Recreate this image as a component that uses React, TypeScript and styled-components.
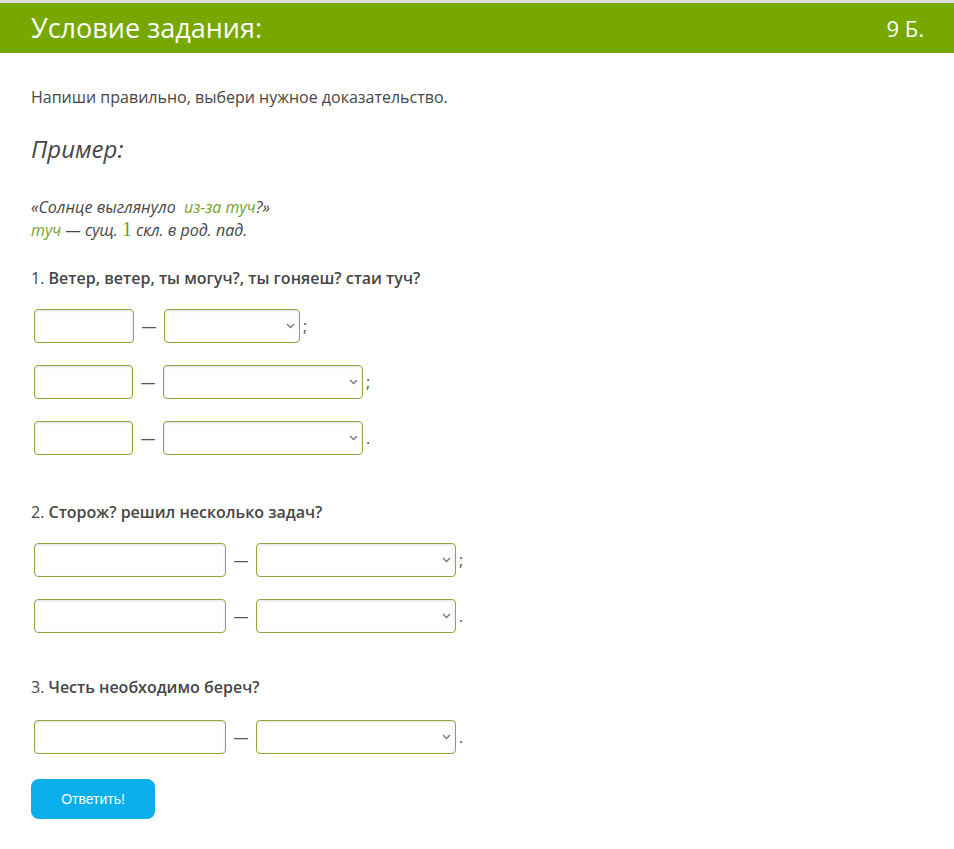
import React from "react";
import styled, { createGlobalStyle } from "styled-components";

const Global = createGlobalStyle`
  html, body { margin: 0; padding: 0; background: #fff; }
  body { font-family: "Open Sans", "Noto Sans", sans-serif; color: #464646; }
`;

const Header = styled.header`
  border-top: 3px solid #dcdcdc;
  background: #76a800;
  height: 50px;
  display: flex;
  align-items: center;
  justify-content: space-between;
  padding: 0 30px 0 31px;
  color: #fff;
`;

const Title = styled.h1`
  margin: 0;
  font-size: 27px;
  font-weight: 400;
  line-height: 30px;
`;

const Points = styled.span`
  font-size: 22px;
  line-height: 30px;
`;

const Content = styled.main`
  padding: 0 31px 30px 31px;
`;

const Instruction = styled.p`
  margin: 34px 0 0 0;
  font-size: 16px;
  line-height: 20px;
`;

const ExampleTitle = styled.h2`
  margin: 27px 0 0 0;
  font-size: 24px;
  font-weight: 400;
  font-style: italic;
  line-height: 30px;
`;

const Example = styled.div`
  margin-top: 32px;
  font-size: 16px;
  font-style: italic;
  line-height: 22px;
`;

const Green = styled.span`
  color: #78a22f;
`;

const Num = styled.span`
  font-family: "Liberation Serif", "DejaVu Serif", serif;
  font-style: normal;
  font-size: 20px;
  color: #6e9d2b;
`;

const Question = styled.p<{ $top: number }>`
  margin: ${(p) => p.$top}px 0 0 0;
  font-size: 16px;
  line-height: 20px;
`;

const Strong = styled.span`
  font-weight: 600;
`;

const Rows = styled.div<{ $top: number }>`
  margin-top: ${(p) => p.$top}px;
  padding-left: 3px;
  display: flex;
  flex-direction: column;
  gap: 22px;
`;

const Row = styled.div`
  display: flex;
  align-items: center;
`;

const fieldBase = `
  box-sizing: border-box;
  height: 34px;
  border: 1px solid #8aab3a;
  border-radius: 4px;
  background: #fff;
  box-shadow: inset 0 1px 3px rgba(0,0,0,0.12);
  font-family: "Open Sans", sans-serif;
  font-size: 14px;
  outline: none;
`;

const TextField = styled.input<{ $w: number }>`
  ${fieldBase}
  width: ${(p) => p.$w}px;
  padding: 0 6px;
`;

const Dash = styled.span`
  margin: 0 7px;
  font-size: 15px;
  color: #555;
  width: 16px;
  text-align: center;
`;

const SelectWrap = styled.div<{ $w: number }>`
  position: relative;
  width: ${(p) => p.$w}px;
  height: 34px;
`;

const Select = styled.select`
  ${fieldBase}
  width: 100%;
  appearance: none;
  -webkit-appearance: none;
  padding: 0 20px 0 6px;
  color: #333;
`;

const Chevron = styled.svg`
  position: absolute;
  right: 5px;
  top: 14px;
  width: 9px;
  height: 6px;
  pointer-events: none;
`;

const Punct = styled.span`
  margin-left: 3px;
  font-size: 16px;
  color: #555;
`;

const Button = styled.button`
  margin-top: 25px;
  width: 124px;
  height: 40px;
  border: none;
  border-radius: 8px;
  background: #0aaeea;
  color: #fff;
  font-family: "Liberation Sans", Arial, sans-serif;
  font-size: 14px;
  cursor: pointer;
`;

type RowSpec = { input: number; select: number; punct: string };

function AnswerRow({ input, select, punct }: RowSpec) {
  return (
    <Row>
      <TextField $w={input} type="text" />
      <Dash>—</Dash>
      <SelectWrap $w={select}>
        <Select defaultValue="">
          <option value=""></option>
        </Select>
        <Chevron viewBox="0 0 9 6">
          <path d="M1 1 L4.5 4.5 L8 1" fill="none" stroke="#777" strokeWidth="1.3" />
        </Chevron>
      </SelectWrap>
      <Punct>{punct}</Punct>
    </Row>
  );
}

export default function App() {
  return (
    <>
      <Global />
      <Header>
        <Title>Условие задания:</Title>
        <Points>9 Б.</Points>
      </Header>
      <Content>
        <Instruction>Напиши правильно, выбери нужное доказательство.</Instruction>
        <ExampleTitle>Пример:</ExampleTitle>
        <Example>
          «Солнце выглянуло&nbsp; <Green>из-за туч</Green>?»
          <br />
          <Green>туч</Green> — сущ. <Num>1</Num> скл. в род. пад.
        </Example>

        <Question $top={27}>
          1. <Strong>Ветер, ветер, ты могуч?, ты гоняеш? стаи туч?</Strong>
        </Question>
        <Rows $top={21}>
          <AnswerRow input={100} select={136} punct=";" />
          <AnswerRow input={99} select={200} punct=";" />
          <AnswerRow input={99} select={200} punct="." />
        </Rows>

        <Question $top={47}>
          2. <Strong>Сторож? решил несколько задач?</Strong>
        </Question>
        <Rows $top={21}>
          <AnswerRow input={192} select={200} punct=";" />
          <AnswerRow input={192} select={200} punct="." />
        </Rows>

        <Question $top={44}>
          3. <Strong>Честь необходимо береч?</Strong>
        </Question>
        <Rows $top={23}>
          <AnswerRow input={192} select={200} punct="." />
        </Rows>

        <Button>Ответить!</Button>
      </Content>
    </>
  );
}
